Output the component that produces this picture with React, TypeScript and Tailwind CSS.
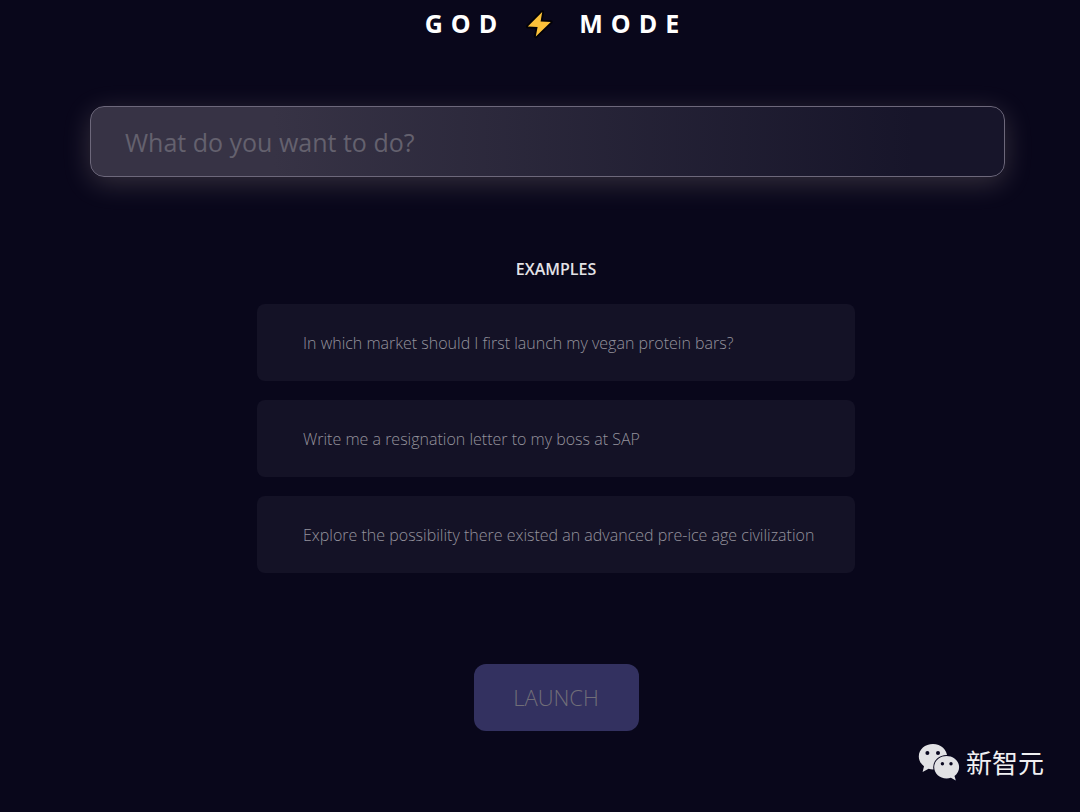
import { useState } from 'react'

const EXAMPLES = [
  'In which market should I first launch my vegan protein bars?',
  'Write me a resignation letter to my boss at SAP',
  'Explore the possibility there existed an advanced pre-ice age civilization',
]

function Bolt() {
  return (
    <svg viewBox="0 0 28 32" className="h-8 w-7" aria-hidden="true">
      <path
        d="M17.200 4 2.800 18.600l9.800.4-1.800 9.400L25.800 14l-10.200-.4z"
        fill="#fcc13a"
        stroke="#020106"
        strokeWidth="3.6"
        strokeLinejoin="round"
        paintOrder="stroke"
      />
    </svg>
  )
}

function WeChatLogo() {
  return (
    <svg viewBox="0 0 42 38" className="h-[38px] w-[42px]" aria-hidden="true">
      <path
        d="M15 1C7 1 .8 6.400.8 13.400c0 4 2 7.400 5.200 9.800L4.600 29l6-3.200c1.500.4 2.900.6 4.400.6 8 0 14.200-5.500 14.200-12.500S23 1 15 1z"
        fill="#e2e2e5"
      />
      <circle cx="9.400" cy="10" r="2" fill="#0a0820" />
      <circle cx="20" cy="10" r="2" fill="#0a0820" />
      <path
        d="M28.600 13c-7 0-12.400 5-12.400 11.200s5.400 11.200 12.400 11.200c1.500 0 3-.2 4.300-.7l4.900 2.700-1.300-4.500c2.900-2.100 4.600-5.200 4.600-8.700C41.100 18 35.600 13 28.600 13z"
        fill="#e2e2e5"
        stroke="#0a0820"
        strokeWidth="2"
        paintOrder="stroke"
      />
      <circle cx="24.400" cy="20.800" r="1.700" fill="#0a0820" />
      <circle cx="33" cy="20.800" r="1.700" fill="#0a0820" />
    </svg>
  )
}

export default function App() {
  const [prompt, setPrompt] = useState('')

  return (
    <div className="flex min-h-screen flex-col bg-[#09071b] font-['Open_Sans','Noto_Sans',sans-serif]">
      <h1 className="flex h-12 items-center justify-center gap-5 pl-8 text-[25px] font-bold text-white">
        <span className="tracking-[8px]">GOD</span>
        <Bolt />
        <span className="pl-1.5 tracking-[8px]">MODE</span>
      </h1>

      <form
        className="flex flex-1 flex-col items-center pt-[58px]"
        onSubmit={(e) => e.preventDefault()}
      >
        <div className="w-full pr-[75px] pl-[90px]">
          <input
            type="text"
            aria-label="Prompt"
            placeholder="What do you want to do?"
            value={prompt}
            onChange={(e) => setPrompt(e.target.value)}
            className="block h-[71px] w-full rounded-[14px] border border-[#6d687b] bg-linear-to-r from-[#373345] from-20% to-[#17152a] to-90% px-[34px] text-[25px] text-white shadow-[0_6px_28px_rgba(255,235,215,0.18)] outline-none placeholder:text-[#64616e]"
          />
        </div>

        <section className="mt-20 flex w-full flex-col items-center pl-8">
          <h2 className="text-base leading-6 font-semibold text-[#e3e2e6]">EXAMPLES</h2>
          <div className="mt-[23px] flex w-[598px] max-w-full flex-col gap-[19px]">
            {EXAMPLES.map((text) => (
              <button
                key={text}
                type="button"
                onClick={() => setPrompt(text)}
                className="h-[77px] rounded-lg bg-[#141226] px-[46px] text-left text-base font-light whitespace-nowrap text-[#94929d]"
              >
                {text}
              </button>
            ))}
          </div>
        </section>

        <div className="mt-[91px] pl-8">
          <button
            type="submit"
            className="h-[67px] w-[165px] rounded-xl bg-[#333160] text-[22px] font-light text-[#716e78]"
          >
            LAUNCH
          </button>
        </div>
      </form>

      <footer className="flex h-[69px] items-start justify-end gap-1.5 pr-9 font-['Noto_Sans_CJK_SC',sans-serif]">
        <WeChatLogo />
        <span className="text-[26px] leading-[38px] text-[#f0f0f2]">新智元</span>
      </footer>
    </div>
  )
}
